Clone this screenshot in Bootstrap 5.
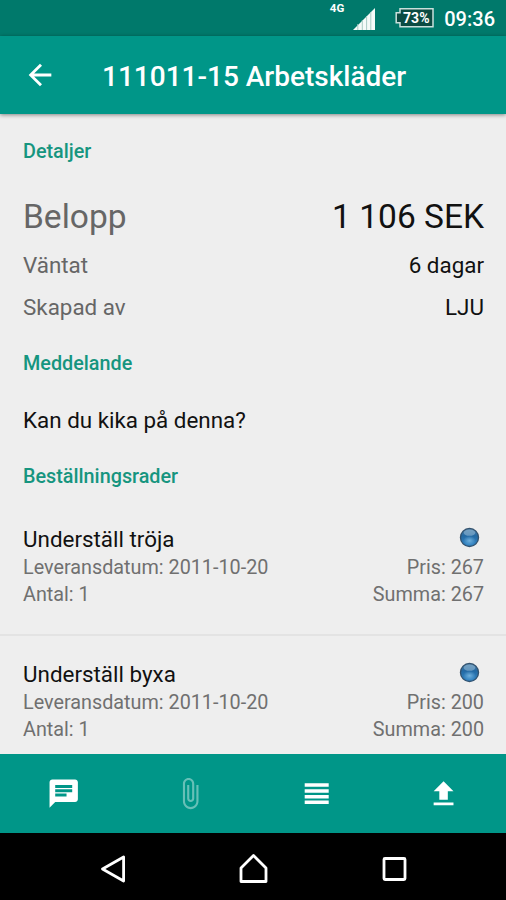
<!DOCTYPE html>
<html lang="sv">
<head>
<meta charset="utf-8">
<meta name="viewport" content="width=device-width, initial-scale=1">
<title>111011-15 Arbetskläder</title>
<link href="https://cdn.jsdelivr.net/npm/bootstrap@5.3.0/dist/css/bootstrap.min.css" rel="stylesheet">
<style>
  body { font-family: Roboto, "Liberation Sans", sans-serif; background: #eee; color: #111; }
  .screen { height: 900px; }
  .status-bar { height: 36px; background: #00796b; padding-right: 11px; }
  .net-label { font-size: 11.5px; line-height: 12px; margin: 2px 9px 0 0; }
  .signal { margin: 0 20px 0 0; }
  .clock { font-size: 20px; line-height: 36px; margin: 1px 0 0 10px; }
  .app-bar { height: 78px; background: #009688; box-shadow: 0 1px 4px rgba(0,0,0,.45); padding-left: 23px; }
  .app-title { font-size: 28px; line-height: 34px; margin: 3px 0 0 45px; }
  .details { padding: 0 22px 0 23px; }
  .section-title { font-size: 19.8px; line-height: 71px; color: #16957f; }
  .section-title.first { line-height: 75px; }
  .line { font-size: 22.4px; line-height: 42px; }
  .line.amount { font-size: 33.5px; line-height: 56px; }
  .line.sub { line-height: 41.5px; }
  .label-text { color: #666; }
  .order-row { height: 124px; padding: 13px 22px 0 23px; border-bottom: 2px solid #e3e3e3; }
  .order-row + .order-row { height: 135px; padding-top: 24px; }
  .order-name { font-size: 22.4px; line-height: 28px; }
  .order-meta { font-size: 19.8px; line-height: 27px; color: #707070; padding-top: 1px; }
  .status-dot { margin: -3px 4px 0 0; }
  .tool-bar { height: 79px; background: #009688; }
  .nav-keys { height: 67px; background: #000; }
</style>
<script src="https://cdn.jsdelivr.net/npm/bootstrap@5.3.0/dist/js/bootstrap.bundle.min.js"></script>
</head>
<body>
<svg width="0" height="0" class="position-absolute" aria-hidden="true">
  <defs>
    <linearGradient id="ball" x1="0" y1="0" x2="0" y2="1">
      <stop offset="0" stop-color="#5585aa"/><stop offset=".4" stop-color="#2369a3"/><stop offset="1" stop-color="#3488c8"/>
    </linearGradient>
    <radialGradient id="shine"><stop offset="0" stop-color="#8cc8ee"/><stop offset="1" stop-color="#8cc8ee" stop-opacity="0"/></radialGradient>
    <symbol id="dot" viewBox="0 0 20 20">
      <circle cx="10" cy="10" r="8.600" fill="url(#ball)" stroke="#34536f" stroke-width="1.300"/>
      <ellipse cx="10" cy="5.400" rx="5.500" ry="3" fill="#8fb5d2" opacity=".6"/>
      <ellipse cx="10" cy="13" rx="6" ry="4.500" fill="url(#shine)" opacity=".7"/>
    </symbol>
  </defs>
</svg>
<div class="screen d-flex flex-column overflow-hidden">
  <header class="status-bar d-flex justify-content-end align-items-start text-white flex-shrink-0">
    <span class="net-label fw-bold">4G</span>
    <svg class="signal" width="22" height="36" viewBox="0 0 22 36"><path d="M0 30 22 8v22z" fill="#f5faf8"/><path d="M4.800 24v6M9.300 20v10M13.600 16v14M17.800 12v18" stroke="#a9cbc4" stroke-width="1"/></svg>
    <svg width="39" height="36" viewBox="0 0 39 36"><path d="M5 8.700h33v18H5v-4H1.200v-10H5z" fill="#0b4b42" stroke="#c9dfdb" stroke-width="1.500"/><text x="21.300" y="22.900" text-anchor="middle" font-family="Roboto, sans-serif" font-weight="700" font-size="14" fill="#fff">73%</text></svg>
    <span class="clock fw-medium">09:36</span>
  </header>
  <div class="app-bar d-flex align-items-center text-white flex-shrink-0 position-relative">
    <svg width="34" height="34" viewBox="0 0 24 24" fill="#fff"><path d="M20 11H7.830l5.590-5.590L12 4l-8 8 8 8 1.410-1.410L7.830 13H20z"/></svg>
    <h1 class="app-title">111011-15 Arbetskläder</h1>
  </div>
  <main class="flex-grow-1 overflow-hidden">
    <section class="details">
      <h2 class="section-title first mb-0">Detaljer</h2>
      <div class="line amount d-flex justify-content-between"><span class="label-text">Belopp</span><span>1 106 SEK</span></div>
      <div class="line sub d-flex justify-content-between"><span class="label-text">Väntat</span><span>6 dagar</span></div>
      <div class="line sub d-flex justify-content-between"><span class="label-text">Skapad av</span><span>LJU</span></div>
      <h2 class="section-title mb-0">Meddelande</h2>
      <p class="line mb-0">Kan du kika på denna?</p>
      <h2 class="section-title mb-0">Beställningsrader</h2>
    </section>
    <section>
      <div class="order-row">
        <div class="order-name d-flex justify-content-between align-items-center"><span>Underställ tröja</span><svg class="status-dot" width="21" height="21"><use href="#dot"/></svg></div>
        <div class="order-meta">
          <div class="d-flex justify-content-between"><span>Leveransdatum: 2011-10-20</span><span>Pris: 267</span></div>
          <div class="d-flex justify-content-between"><span>Antal: 1</span><span>Summa: 267</span></div>
        </div>
      </div>
      <div class="order-row">
        <div class="order-name d-flex justify-content-between align-items-center"><span>Underställ byxa</span><svg class="status-dot" width="21" height="21"><use href="#dot"/></svg></div>
        <div class="order-meta">
          <div class="d-flex justify-content-between"><span>Leveransdatum: 2011-10-20</span><span>Pris: 200</span></div>
          <div class="d-flex justify-content-between"><span>Antal: 1</span><span>Summa: 200</span></div>
        </div>
      </div>
    </section>
  </main>
  <nav class="tool-bar row g-0 align-items-center text-center flex-shrink-0">
    <div class="col"><svg width="34" height="34" viewBox="-.5 .3 24 24" fill="#fff"><path d="M20 2H4c-1.100 0-1.990.9-1.990 2L2 22l4-4h14c1.100 0 2-.9 2-2V4c0-1.100-.9-2-2-2zM6 9h12v2H6V9zm8 5H6v-2h8v2zm4-6H6V6h12v2z"/></svg></div>
    <div class="col"><svg width="34" height="34" viewBox="0 .3 24 24" fill="#fff" opacity=".4"><path d="M16.500 6v11.500c0 2.210-1.790 4-4 4s-4-1.790-4-4V5c0-1.380 1.120-2.500 2.500-2.500s2.500 1.120 2.500 2.500v10.500c0 .550-.450 1-1 1s-1-.450-1-1V6H10v9.500c0 1.380 1.120 2.500 2.500 2.500s2.500-1.120 2.500-2.500V5c0-2.210-1.790-4-4-4S7 2.790 7 5v12.500c0 3.040 2.460 5.500 5.500 5.500s5.500-2.460 5.500-5.500V6z"/></svg></div>
    <div class="col"><svg width="34" height="34" viewBox="-.7 .3 34 34" fill="#fff"><path d="M5 6.500h24v3.500H5zM5 12.500h24v3.500H5zM5 18.200h24v3.500H5zM5 23.900h24v3.500H5z"/></svg></div>
    <div class="col"><svg width="34" height="34" viewBox="-.4 0 24 24" fill="#fff"><path d="M9 16h6v-6h4l-7-7-7 7h4zm-4 2h14v2H5z"/></svg></div>
  </nav>
  <footer class="nav-keys d-flex justify-content-center align-items-center flex-shrink-0">
    <svg width="506" height="67" viewBox="0 0 506 67" fill="none" stroke="#fff" stroke-width="2.800" stroke-linejoin="round"><path d="M102.500 36 123.600 24v24zM241 48.500V35l12.500-12.500L266 35v13.500z"/><rect x="384" y="25.500" width="21" height="21" rx="1"/></svg>
  </footer>
</div>
</body>
</html>
